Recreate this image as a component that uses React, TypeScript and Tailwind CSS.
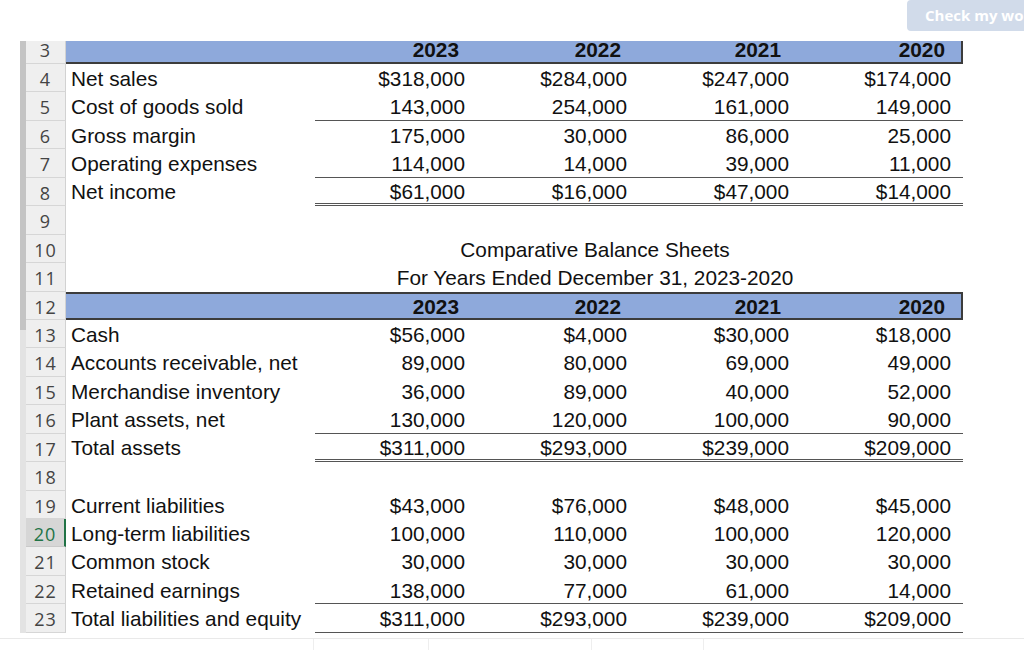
import React from "react";

type Line = "none" | "single" | "double";

const rowsTop: { n: number; label: string; values: string[]; line?: Line }[] = [
  { n: 4, label: "Net sales", values: ["$318,000", "$284,000", "$247,000", "$174,000"] },
  { n: 5, label: "Cost of goods sold", values: ["143,000", "254,000", "161,000", "149,000"], line: "single" },
  { n: 6, label: "Gross margin", values: ["175,000", "30,000", "86,000", "25,000"] },
  { n: 7, label: "Operating expenses", values: ["114,000", "14,000", "39,000", "11,000"], line: "single" },
  { n: 8, label: "Net income", values: ["$61,000", "$16,000", "$47,000", "$14,000"], line: "double" },
];

const assets: { n: number; label: string; values: string[]; line?: Line }[] = [
  { n: 13, label: "Cash", values: ["$56,000", "$4,000", "$30,000", "$18,000"] },
  { n: 14, label: "Accounts receivable, net", values: ["89,000", "80,000", "69,000", "49,000"] },
  { n: 15, label: "Merchandise inventory", values: ["36,000", "89,000", "40,000", "52,000"] },
  { n: 16, label: "Plant assets, net", values: ["130,000", "120,000", "100,000", "90,000"], line: "single" },
  { n: 17, label: "Total assets", values: ["$311,000", "$293,000", "$239,000", "$209,000"], line: "double" },
];

const liabilities: { n: number; label: string; values: string[]; line?: Line }[] = [
  { n: 19, label: "Current liabilities", values: ["$43,000", "$76,000", "$48,000", "$45,000"] },
  { n: 20, label: "Long-term liabilities", values: ["100,000", "110,000", "100,000", "120,000"] },
  { n: 21, label: "Common stock", values: ["30,000", "30,000", "30,000", "30,000"] },
  { n: 22, label: "Retained earnings", values: ["138,000", "77,000", "61,000", "14,000"], line: "single" },
  { n: 23, label: "Total liabilities and equity", values: ["$311,000", "$293,000", "$239,000", "$209,000"], line: "single" },
];

const years = ["2023", "2022", "2021", "2020"];

function RowNum({ n, active = false, short = false }: { n: number; active?: boolean; short?: boolean }) {
  const size = short ? "h-[23px] leading-[18px] pt-0" : "h-[28.45px] leading-[24px] pt-[3px]";
  if (active) {
    return (
      <div className={`w-[40px] shrink-0 text-center bg-[#d6d6d6] text-[#217346] border-r-2 border-r-[#217346] border-b border-b-[#c9c9c9] font-['Open_Sans',sans-serif] text-[18px] tracking-[1px] ${size}`}>
        {n}
      </div>
    );
  }
  return (
    <div className={`w-[40px] shrink-0 text-center bg-[#efefef] text-[#444] border-r border-r-[#d2d2d2] border-b border-b-[#d6d6d6] font-['Open_Sans',sans-serif] text-[18px] tracking-[1px] ${size}`}>
      {n}
    </div>
  );
}

function DataRow({ n, label, values, line = "none" }: { n: number; label: string; values: string[]; line?: Line }) {
  // underline under the amounts only, like the accounting borders in the sheet
  const lineClass =
    line === "single"
      ? "border-b border-b-[#555]"
      : line === "double"
        ? "border-b-[3px] border-double border-b-[#555] pt-[2px]"
        : "";
  return (
    <div className="flex h-[28.45px]">
      <RowNum n={n} active={n === 20} />
      <div className={`w-[249px] shrink-0 pl-[5px] leading-[24px] whitespace-nowrap ${line === "double" ? "pt-[2px]" : "pt-[3px]"}`}>{label}</div>
      {values.map((v, i) => (
        <div key={i} className={`w-[162px] shrink-0 text-right pr-[12px] leading-[24px] ${line === "double" ? "" : "pt-[3px]"} ${lineClass}`}>
          {v}
        </div>
      ))}
    </div>
  );
}

function EmptyRow({ n }: { n: number }) {
  return (
    <div className="flex h-[28.45px]">
      <RowNum n={n} />
    </div>
  );
}

function TitleRow({ n, text }: { n: number; text: string }) {
  return (
    <div className="flex h-[28.45px]">
      <RowNum n={n} />
      <div className="w-[249px] shrink-0" />
      <div className="w-[648px] shrink-0 text-center pr-[88px] pt-[3px] leading-[24px] whitespace-nowrap">{text}</div>
    </div>
  );
}

function YearCells({ top }: { top: boolean }) {
  const base = top
    ? "h-[23px] shrink-0 bg-[#8ea9db] border-b-2 border-b-[#3c3c3c] leading-[18px] text-right font-bold "
    : "h-[28.45px] shrink-0 bg-[#8ea9db] border-y-2 border-y-[#3c3c3c] pt-[1px] leading-[24px] text-right font-bold ";
  return (
    <>
      <div className={base + "w-[249px]"} />
      {years.map((y, i) => (
        <div
          key={y}
          className={
            base +
            (i === 3 ? "w-[162px] pr-[16px] border-r-2 border-r-[#3c3c3c]" : i === 2 ? "w-[162px] pr-[20px]" : "w-[162px] pr-[18px]")
          }
        >
          {y}
        </div>
      ))}
    </>
  );
}

export default function App() {
  return (
    <div className="w-[1024px] h-[650px] overflow-hidden bg-white flex flex-col font-['Liberation_Sans',Arial,sans-serif] text-[20.8px] text-[#111]">
      <div className="h-[41px] shrink-0 flex justify-end items-start">
        <button className="h-[31px] w-[150px] shrink-0 mr-[-33px] rounded-[4px] bg-[#d1dbea] text-white text-left pl-[18px] font-['Open_Sans',sans-serif] font-bold text-[15px] whitespace-nowrap">
          Check my work
        </button>
      </div>

      <div className="flex pl-[20px]">
        <div className="w-[6px] shrink-0 flex flex-col">
          <div className="h-[289px] bg-[#c4c4c4]" />
          <div className="flex-1 bg-[#e3e3e3]" />
        </div>

        <div className="flex flex-col">
          <div className="flex h-[23px]">
            <RowNum n={3} short />
            <YearCells top />
          </div>
          {rowsTop.map((r) => (
            <DataRow key={r.n} {...r} />
          ))}
          <EmptyRow n={9} />
          <TitleRow n={10} text="Comparative Balance Sheets" />
          <TitleRow n={11} text="For Years Ended December 31, 2023-2020" />
          <div className="flex h-[28.45px]">
            <RowNum n={12} />
            <YearCells top={false} />
          </div>
          {assets.map((r) => (
            <DataRow key={r.n} {...r} />
          ))}
          <EmptyRow n={18} />
          {liabilities.map((r) => (
            <DataRow key={r.n} {...r} />
          ))}
        </div>
      </div>

      <div className="mt-[5px] h-[14px] border-t border-t-[#e9e9e9] flex pl-[313px]">
        <div className="w-[115px] border-l border-l-[#eeeeee]" />
        <div className="w-[163px] border-l border-l-[#eeeeee]" />
        <div className="w-[112px] border-l border-l-[#eeeeee]" />
        <div className="w-[100px] border-l border-l-[#eeeeee]" />
      </div>
    </div>
  );
}
